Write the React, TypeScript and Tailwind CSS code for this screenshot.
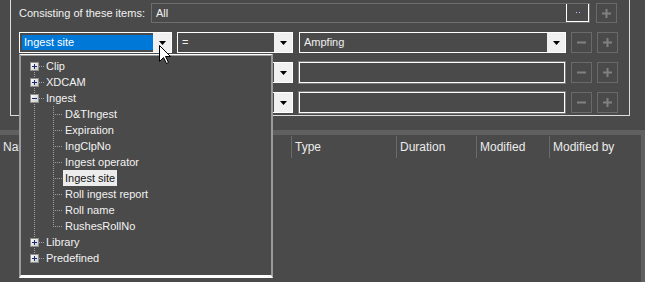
import React from "react";

const FONT = { fontFamily: '"Liberation Sans", Arial, sans-serif' };

function Arrow() {
  return (
    <svg width="7" height="4" viewBox="0 0 7 4">
      <polygon points="0,0 7,0 3.5,4" fill="#000" />
    </svg>
  );
}

function Combo({ w, text, highlight }: { w: string; text?: string; highlight?: boolean }) {
  return (
    <div className={`${w} h-[21px] border border-white flex`}>
      <div className="flex-1 pl-[2px] py-[2px] flex">
        {highlight ? (
          <div className="flex-1 bg-[#0078d7] text-white flex items-center pl-[2px]">{text}</div>
        ) : (
          <div className="flex-1 text-[#f0f0f0] flex items-center pl-[2px]">{text}</div>
        )}
      </div>
      <div className="w-[18px] bg-[#f0f0f0] flex items-center justify-center">
        <Arrow />
      </div>
    </div>
  );
}

function Btn({ kind }: { kind: "plus" | "minus" }) {
  return (
    <div className="w-[21px] h-[21px] border border-[#6a6a6a] flex items-center justify-center">
      <svg width="11" height="11" viewBox="0 0 11 11">
        <rect x="1" y="4.5" width="9" height="2" fill="#808080" />
        {kind === "plus" && <rect x="4.5" y="1" width="2" height="9" fill="#808080" />}
      </svg>
    </div>
  );
}

type Row = { label: string; level: 0 | 1; box?: "+" | "-"; first?: boolean; last?: boolean; lastChild?: boolean; selected?: boolean };

const rows: Row[] = [
  { label: "Clip", level: 0, box: "+", first: true },
  { label: "XDCAM", level: 0, box: "+" },
  { label: "Ingest", level: 0, box: "-" },
  { label: "D&TIngest", level: 1 },
  { label: "Expiration", level: 1 },
  { label: "IngClpNo", level: 1 },
  { label: "Ingest operator", level: 1 },
  { label: "Ingest site", level: 1, selected: true },
  { label: "Roll ingest report", level: 1 },
  { label: "Roll name", level: 1 },
  { label: "RushesRollNo", level: 1, lastChild: true },
  { label: "Library", level: 0, box: "+" },
  { label: "Predefined", level: 0, box: "+", last: true },
];

function Gutter({ r }: { r: Row }) {
  const w = r.level === 0 ? 23 : 42;
  const dot = { stroke: "#a0a0a0", strokeWidth: 1, strokeDasharray: "1 1" };
  return (
    <svg width={w} height="16" viewBox={`0 0 ${w} 16`} className="shrink-0">
      {r.level === 0 ? (
        <>
          <line x1="13.5" y1={r.first ? 8 : 0} x2="13.5" y2={r.last ? 8 : 16} {...dot} />
          <line x1="18" y1="8.5" x2="23" y2="8.5" {...dot} />
          <defs>
            <linearGradient id="bx" x1="0" y1="0" x2="1" y2="1">
              <stop offset="0" stopColor="#ffffff" />
              <stop offset="1" stopColor="#c8c8c8" />
            </linearGradient>
          </defs>
          <rect x="9.5" y="4.5" width="8" height="8" fill="url(#bx)" stroke="#8e8f8f" />
          <rect x="11" y="8" width="5" height="1" fill="#1b2a6b" />
          {r.box === "+" && <rect x="13" y="6" width="1" height="5" fill="#1b2a6b" />}
        </>
      ) : (
        <>
          <line x1="13.5" y1="0" x2="13.5" y2="16" {...dot} />
          <line x1="32.5" y1="0" x2="32.5" y2={r.lastChild ? 9 : 16} {...dot} />
          <line x1="34" y1="8.5" x2="42" y2="8.5" {...dot} />
        </>
      )}
    </svg>
  );
}

function Tree() {
  return (
    <div className="absolute left-[19px] top-[54px] w-[254px] h-[224px] bg-[#4a4a4a] border-t border-t-white border-l-2 border-l-[#9a9a9a] border-r-2 border-r-[#9a9a9a] border-b-[3px] border-b-white">
      <div className="h-full border-t border-t-[#9a9a9a] pt-[2px]">
        {rows.map((r, i) => (
          <div key={i} className="h-[16px] flex items-center">
            <Gutter r={r} />
            <div
              className={`h-[16px] flex items-center px-[2px] ${
                r.selected ? "bg-[#ececec] text-[#111]" : "text-[#f2f2f2]"
              }`}
            >
              {r.label}
            </div>
          </div>
        ))}
      </div>
    </div>
  );
}

function Cursor() {
  return (
    <svg className="absolute left-[159px] top-[45px]" width="13" height="20" viewBox="0 0 13 20">
      <polygon
        points="0.5,0.5 0.5,16.5 4.5,12.5 7.5,18.5 9.5,17.5 6.5,11.5 11.5,11.5"
        fill="#fff"
        stroke="#000"
        strokeWidth="1"
      />
    </svg>
  );
}

export default function App() {
  return (
    <div className="w-[645px] h-[282px] bg-[#4a4a4a] relative overflow-hidden text-[11px] leading-none flex flex-col" style={FONT}>
      <div className="ml-[10px] w-[620px] h-[116px] shrink-0 border-l border-r border-b border-[#dcdcdc] pt-[3px] pl-[8px] flex flex-col">
        <div className="flex items-center h-[20px]">
          <div className="w-[132px] text-[#f2f2f2]">Consisting of these items:</div>
          <div className="w-[439px] h-[20px] border border-[#6e6e6e] flex items-center justify-between">
            <span className="pl-[4px] text-[#f2f2f2]">All</span>
            <div className="w-[23px] h-[18px] self-start border-l border-r border-b border-white flex items-center justify-center gap-[2px]">
              <div className="w-[1px] h-[1px] bg-[#c0c8ff]" />
              <div className="w-[1px] h-[1px] bg-[#c0c8ff]" />
            </div>
          </div>
          <div className="ml-[6px] h-[20px] w-[21px] border border-[#6a6a6a] flex items-center justify-center">
            <svg width="11" height="11" viewBox="0 0 11 11">
              <rect x="1" y="4.5" width="9" height="2" fill="#808080" />
              <rect x="4.5" y="1" width="2" height="9" fill="#808080" />
            </svg>
          </div>
        </div>

        <div className="mt-[9px] flex items-center h-[21px]">
          <Combo w="w-[153px]" text="Ingest site" highlight />
          <div className="ml-[5px]"><Combo w="w-[116px]" text="=" /></div>
          <div className="ml-[6px]"><Combo w="w-[267px]" text="Ampfing" /></div>
          <div className="ml-[5px]"><Btn kind="minus" /></div>
          <div className="ml-[5px]"><Btn kind="plus" /></div>
        </div>

        {[0, 1].map((k) => (
          <div key={k} className="mt-[9px] flex items-center h-[21px]">
            <Combo w="w-[153px]" />
            <div className="ml-[5px]"><Combo w="w-[116px]" /></div>
            <div className="ml-[6px] w-[266px] h-[21px] border border-white outline outline-1 outline-[#7a7a7a]" />
            <div className="ml-[6px]"><Btn kind="minus" /></div>
            <div className="ml-[5px]"><Btn kind="plus" /></div>
          </div>
        ))}
      </div>

      <div className="mt-[14px] h-[5px] bg-[#606060] shrink-0" />
      <div className="flex-1 border-r-4 border-[#606060] flex flex-col">
        <div className="flex h-[24px] pt-[1px] text-[#ececec] text-[12px]">
          <div className="w-[291px] pl-[3px] flex items-center h-[22px]">Name</div>
          <div className="w-[105px] border-l border-[#6a6a6a] pl-[3px] flex items-center h-[22px]">Type</div>
          <div className="w-[80px] border-l border-[#6a6a6a] pl-[3px] flex items-center h-[22px]">Duration</div>
          <div className="w-[73px] border-l border-[#6a6a6a] pl-[3px] flex items-center h-[22px]">Modified</div>
          <div className="flex-1 border-l border-[#6a6a6a] pl-[3px] flex items-center h-[22px]">Modified by</div>
        </div>
      </div>

      <Tree />
      <Cursor />
    </div>
  );
}
